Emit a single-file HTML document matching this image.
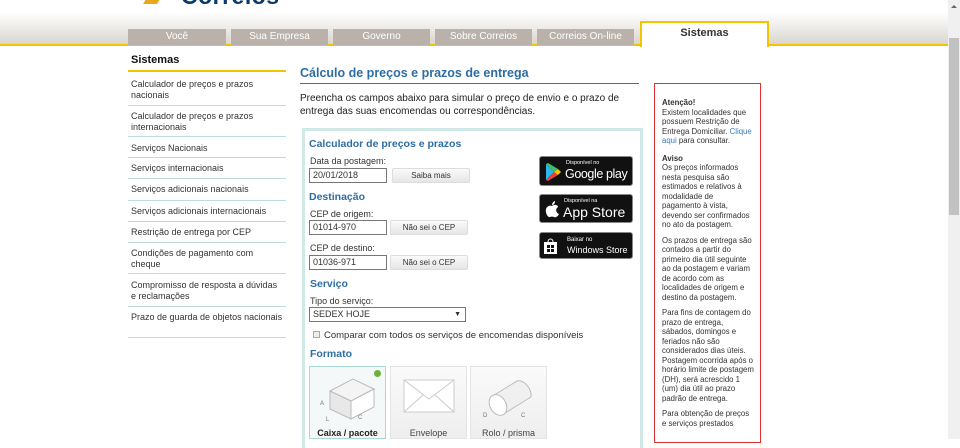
<!DOCTYPE html>
<html><head><meta charset="utf-8">
<style>
*{margin:0;padding:0;box-sizing:border-box}
body{width:960px;height:439px;overflow:hidden;background:#fff;font-family:"Liberation Sans",Arial,sans-serif;font-size:9px;color:#333;position:relative}
.abs{position:absolute;white-space:nowrap}
.hdr{left:0;top:0;width:948px;height:46px;background:linear-gradient(#fff 0,#fff 12px,#f7f6f4 20px,#d8d4ce 45px);border-bottom:2px solid #f5c400}
.tab{top:29px;height:16px;background:#bab2aa;color:#fff;font-size:10px;text-align:center;line-height:16px}
.tab.on{top:21px;height:26px;background:#fff;border:2px solid #f5c400;border-bottom:none;color:#333;font-weight:bold;font-size:11px;line-height:20px}
.side{left:128px;top:52px;width:158px;white-space:normal}
.side h3{font-size:11px;color:#111;padding:2px 3px 4px;border-bottom:2px solid #f5c400;height:20px}
.side div{padding:5px 3px 0;border-bottom:1px solid #bfdcdc;font-size:9px;line-height:10.5px;color:#333;height:21px}
.intro{left:300px;top:92px;width:340px;font-size:10px;line-height:13px;color:#222;white-space:normal}
.box{left:302px;top:128px;width:341px;height:320px;border:3px solid #d0e8e6;border-bottom:none}
.h{color:#2e6da4;font-weight:bold;font-size:10.5px}
.lbl{font-size:9px;color:#333}
.inp{height:15px;border:1px solid #777;font-size:9px;line-height:13px;padding-left:3px;background:#fff}
.btn{height:15px;border:1px solid #ddd;background:linear-gradient(#fafafa,#e6e6e6);font-size:8px;text-align:center;line-height:13px;border-radius:2px}
.badge{background:#111;border:1px solid #888;border-radius:3px;color:#fff}
.fmt{top:366px;height:73px;width:77px;border:1px solid #e4e4e4;background:linear-gradient(#fafafa,#eee);font-size:9px;text-align:center}
.note{left:654px;top:83px;width:107px;height:360px;border:1px solid #e03030;padding:14px 6px 0 7px;font-size:7.8px;line-height:9.5px;color:#333;white-space:normal}
.note p{margin-bottom:6px}
.scroll{left:948px;top:0;width:12px;height:439px;background:#f0f0f0}
</style></head><body>
<div class="abs hdr"></div>
<div class="abs" style="left:146px;top:-6px;width:14px;height:10px;background:#e8a818;transform:skewX(-30deg)"></div>
<div class="abs" style="left:181px;top:-17px;font-size:23px;font-weight:bold;color:#0a3a6a;letter-spacing:0.5px">Correios</div>
<div class="abs tab" style="left:128px;width:98px">Você</div>
<div class="abs tab" style="left:231px;width:97px">Sua Empresa</div>
<div class="abs tab" style="left:333px;width:97px">Governo</div>
<div class="abs tab" style="left:435px;width:97px">Sobre Correios</div>
<div class="abs tab" style="left:537px;width:97px">Correios On-line</div>
<div class="abs tab on" style="left:640px;width:129px">Sistemas</div>

<div class="abs side">
<h3>Sistemas</h3>
<div style="height:34px;padding-top:7px">Calculador de preços e prazos nacionais</div>
<div style="height:31px">Calculador de preços e prazos internacionais</div>
<div style="padding-top:6px">Serviços Nacionais</div>
<div>Serviços internacionais</div>
<div style="height:22px">Serviços adicionais nacionais</div>
<div>Serviços adicionais internacionais</div>
<div>Restrição de entrega por CEP</div>
<div style="height:31px">Condições de pagamento com cheque</div>
<div style="height:33px;padding-top:6px">Compromisso de resposta a dúvidas e reclamações</div>
<div style="height:31px">Prazo de guarda de objetos nacionais</div>
</div>

<div class="abs" style="left:300px;top:66px;width:339px;height:18px;border-bottom:1px solid #666"></div>
<div class="abs" style="left:300px;top:66px;font-size:12.5px;color:#2e6da4;font-weight:bold">Cálculo de preços e prazos de entrega</div>
<div class="abs intro">Preencha os campos abaixo para simular o preço de envio e o prazo de entrega das suas encomendas ou correspondências.</div>

<div class="abs box"></div>
<div class="abs h" style="left:309px;top:138px">Calculador de preços e prazos</div>
<div class="abs lbl" style="left:310px;top:156px">Data da postagem:</div>
<div class="abs inp" style="left:309px;top:168px;width:78px">20/01/2018</div>
<div class="abs btn" style="left:392px;top:168px;width:78px">Saiba mais</div>
<div class="abs h" style="left:309px;top:191px">Destinação</div>
<div class="abs lbl" style="left:310px;top:209px">CEP de origem:</div>
<div class="abs inp" style="left:309px;top:220px;width:78px">01014-970</div>
<div class="abs btn" style="left:390px;top:220px;width:78px">Não sei o CEP</div>
<div class="abs lbl" style="left:310px;top:243px">CEP de destino:</div>
<div class="abs inp" style="left:309px;top:255px;width:78px">01036-971</div>
<div class="abs btn" style="left:390px;top:255px;width:78px">Não sei o CEP</div>
<div class="abs h" style="left:310px;top:278px">Serviço</div>
<div class="abs lbl" style="left:310px;top:296px">Tipo do serviço:</div>
<div class="abs inp" style="left:309px;top:307px;width:157px">SEDEX HOJE<span style="position:absolute;right:4px;font-size:7px">▼</span></div>
<div class="abs" style="left:313px;top:331px;width:7px;height:7px;border:1px solid #aaa;background:#eee"></div>
<div class="abs" style="left:324px;top:330px;font-size:9.5px;color:#333">Comparar com todos os serviços de encomendas disponíveis</div>
<div class="abs h" style="left:310px;top:348px">Formato</div>

<div class="abs fmt" style="left:309px;border-color:#aad8d4;background:#f4f8f8">
<div class="abs" style="right:4px;top:3px;width:7px;height:7px;border-radius:50%;background:#6cb33e"></div>
<svg class="abs" style="left:8px;top:6px" width="62" height="50" viewBox="0 0 62 50"><path d="M12 18 L35 6 L56 16 L33 28 Z" fill="#f4f4f4" stroke="#bbb"/><path d="M12 18 L12 36 L33 46 L33 28 Z" fill="#e8e8e8" stroke="#bbb"/><path d="M33 28 L33 46 L56 34 L56 16 Z" fill="#fff" stroke="#bbb"/><text x="2" y="32" font-size="6" fill="#777">A</text><text x="8" y="48" font-size="6" fill="#777">L</text><text x="40" y="46" font-size="6" fill="#777">C</text></svg>
<div class="abs" style="left:0;width:75px;top:61px;font-weight:bold;font-size:9px;color:#222">Caixa / pacote</div></div>
<div class="abs fmt" style="left:390px">
<svg class="abs" style="left:12px;top:12px" width="52" height="34"><rect x="1" y="1" width="50" height="32" fill="#fff" stroke="#ccc"/><path d="M1 1 L26 20 L51 1 M1 33 L20 16 M51 33 L32 16" fill="none" stroke="#ccc"/></svg>
<div class="abs" style="left:0;width:75px;top:61px;color:#444">Envelope</div></div>
<div class="abs fmt" style="left:470px">
<svg class="abs" style="left:10px;top:8px" width="60" height="46"><path d="M10 22 L36 6 A8 12 -30 0 1 50 22 L24 38 Z" fill="#f0f0f0" stroke="#bbb"/><ellipse cx="17" cy="30" rx="8" ry="11" transform="rotate(-30 17 30)" fill="#fff" stroke="#bbb"/><text x="2" y="42" font-size="6" fill="#777">D</text><text x="40" y="42" font-size="6" fill="#777">C</text></svg>
<div class="abs" style="left:0;width:75px;top:61px;color:#444">Rolo / prisma</div></div>

<div class="abs badge" style="left:539px;top:156px;width:94px;height:30px">
<svg class="abs" style="left:5px;top:6px" width="17" height="18"><path d="M1 1 L1 17 L9 9 Z" fill="#2fb6e8"/><path d="M1 1 L9 9 L13 6 L3 0 Z" fill="#3cc06a"/><path d="M1 17 L9 9 L13 12 L3 18 Z" fill="#e8413c"/><path d="M9 9 L13 6 L16 9 L13 12 Z" fill="#f6c300"/></svg>
<div class="abs" style="left:26px;top:3px;font-size:5.5px">Disponível no</div>
<div class="abs" style="left:25px;top:10px;font-size:12.5px;letter-spacing:-0.4px">Google play</div></div>
<div class="abs badge" style="left:539px;top:194px;width:94px;height:29px">
<svg class="abs" style="left:5px;top:6px" width="14" height="17"><path d="M7 5 C9 3 13 4 13 6 C10 8 11 12 14 13 C13 15 11 17 9 16 C8 15.5 6 15.5 5 16 C3 17 0 12 1 8 C2 5 5 4 7 5 Z M7 4 C7 2 9 0 10 0 C10 2 9 4 7 4 Z" fill="#fff"/></svg>
<div class="abs" style="left:24px;top:3px;font-size:5.5px">Disponível na</div>
<div class="abs" style="left:23px;top:9px;font-size:14px">App Store</div></div>
<div class="abs badge" style="left:539px;top:232px;width:94px;height:27px">
<svg class="abs" style="left:4px;top:5px" width="13" height="16"><path d="M0 4 L13 4 L13 16 L0 16 Z" fill="#fff"/><path d="M4 4 C4 0 9 0 9 4" fill="none" stroke="#fff"/><rect x="3" y="7" width="3" height="3" fill="#111"/><rect x="7" y="7" width="3" height="3" fill="#111"/><rect x="3" y="11" width="3" height="3" fill="#111"/><rect x="7" y="11" width="3" height="3" fill="#111"/></svg>
<div class="abs" style="left:27px;top:4px;font-size:6px">Baixar no</div>
<div class="abs" style="left:27px;top:12px;font-size:9px">Windows Store</div></div>

<div class="abs note">
<p><b>Atenção!</b><br>Existem localidades que possuem Restrição de Entrega Domiciliar. <span style="color:#3a7bc0">Clique aqui</span> para consultar.</p>
<p style="margin-top:8px"><b>Aviso</b><br>Os preços informados nesta pesquisa são estimados e relativos à modalidade de pagamento à vista, devendo ser confirmados no ato da postagem.</p>
<p>Os prazos de entrega são contados a partir do primeiro dia útil seguinte ao da postagem e variam de acordo com as localidades de origem e destino da postagem.</p>
<p>Para fins de contagem do prazo de entrega, sábados, domingos e feriados não são considerados dias úteis. Postagem ocorrida após o horário limite de postagem (DH), será acrescido 1 (um) dia útil ao prazo padrão de entrega.</p>
<p>Para obtenção de preços e serviços prestados</p>
</div>

<div class="abs scroll"><div class="abs" style="left:3px;top:5px;width:0;height:0;border-left:3px solid transparent;border-right:3px solid transparent;border-bottom:3px solid #666"></div><div class="abs" style="left:1px;top:38px;width:10px;height:177px;background:#c1c1c1"></div></div>
</body></html>
